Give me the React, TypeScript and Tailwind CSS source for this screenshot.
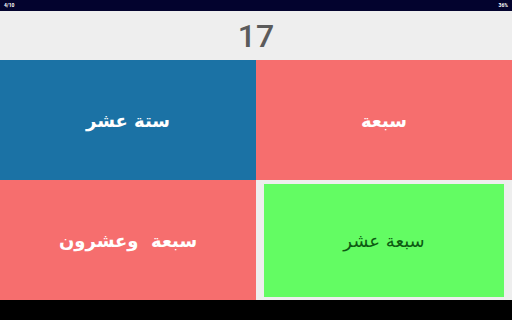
export default function App() {
  const arabic = { fontFamily: '"DejaVu Sans", "Noto Sans", sans-serif' };

  return (
    <div className="w-[512px] h-[320px] flex flex-col bg-black overflow-hidden">
      {/* status bar */}
      <div
        className="h-[11px] bg-[#03032e] flex items-center justify-between px-[4px] text-[5px] font-bold text-white"
        style={{ fontFamily: '"Roboto", sans-serif' }}
      >
        <span>4/10</span>
        <span>36%</span>
      </div>

      {/* question */}
      <div
        className="h-[49px] bg-[#eeeeee] flex items-center justify-center text-[32px] font-medium text-[#5b5b5b]"
        style={{ fontFamily: '"Roboto", sans-serif' }}
      >
        17
      </div>

      {/* answers */}
      <div className="grid grid-cols-2 grid-rows-2 h-[240px]" dir="rtl" style={arabic}>
        <div className="bg-[#f66e6e] flex items-center justify-center text-white text-[18px] font-bold">
          سبعة
        </div>
        <div className="bg-[#1b72a5] flex items-center justify-center text-white text-[18px] font-bold">
          ستة عشر
        </div>
        <div className="bg-[#eeeeee] pt-[4px] pb-[3px] px-[8px] flex">
          <div className="flex-1 bg-[#63fc63] flex items-center justify-center text-[#0d5a12] text-[18px]">
            سبعة عشر
          </div>
        </div>
        <div className="bg-[#f66e6e] flex items-center justify-center text-white text-[18px] font-bold whitespace-pre">
          سبعة  وعشرون
        </div>
      </div>
    </div>
  );
}
